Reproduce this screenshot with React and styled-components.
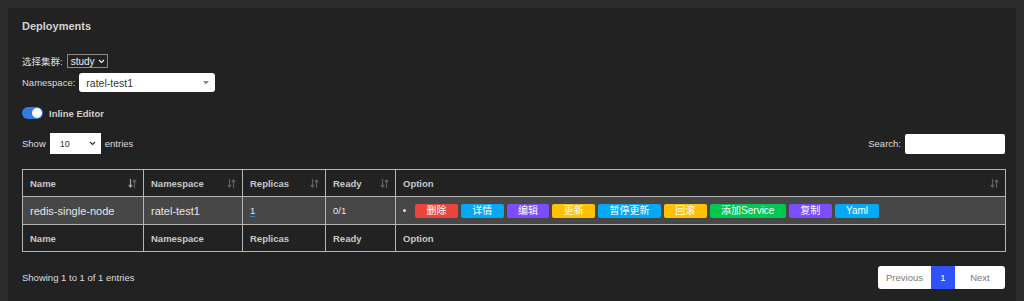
import React from "react";
import styled, { createGlobalStyle } from "styled-components";

const GlobalStyle = createGlobalStyle`
	html, body {
		overflow: hidden;
	}
	body {
		margin: 8px 8px 0;
		background: #2b2b2b;
		font-family: "Liberation Sans", "Noto Sans CJK SC", sans-serif;
		color: #dcdcdc;
	}
`;

const Card = styled.div`
	background: #222222;
	padding: 12px 11px 0 14px;
	height: 293px;
	box-sizing: border-box;
`;

const Title = styled.div`
	font-size: 11px;
	font-weight: bold;
	line-height: 13px;
	color: #d2d2d2;
`;

const FieldRow = styled.div`
	display: flex;
	align-items: center;
	gap: 4px;
	font-size: 9.5px;
	margin-top: ${(p) => p.$mt || 0}px;
	height: ${(p) => p.$h || 16}px;
`;

const DarkSelect = styled.div`
	display: flex;
	align-items: center;
	gap: 3px;
	height: 14px;
	box-sizing: border-box;
	padding: 0 2px 0 3px;
	border: 1px solid #8a8a8a;
	color: #eeeeee;
	font-size: 10px;
`;

const LightSelect = styled.div`
	display: flex;
	align-items: center;
	justify-content: space-between;
	width: ${(p) => p.$w}px;
	height: ${(p) => p.$h}px;
	box-sizing: border-box;
	padding: 0 ${(p) => p.$pr || 6}px 0 ${(p) => p.$pl || 7}px;
	background: #ffffff;
	border-radius: ${(p) => p.$r || 0}px;
	color: #333;
	font-size: ${(p) => p.$fs || 10}px;
`;

const Toggle = styled.div`
	width: 21px;
	height: 12px;
	border-radius: 6px;
	background: #2f7de1;
	position: relative;
	&::after {
		content: "";
		position: absolute;
		right: 1px;
		top: 1px;
		width: 10px;
		height: 10px;
		border-radius: 50%;
		background: #fff;
	}
`;

const ToggleLabel = styled.span`
	font-weight: bold;
	color: #cfcfcf;
	margin-left: 2px;
`;

const ControlBar = styled.div`
	display: flex;
	justify-content: space-between;
	align-items: center;
	margin-top: 14px;
	height: 21px;
	font-size: 9.5px;
`;

const Group = styled.div`
	display: flex;
	align-items: center;
	gap: 4px;
`;

const SearchInput = styled.div`
	width: 100px;
	height: 20px;
	background: #fff;
	border-radius: 2px;
`;

const Table = styled.table`
	margin-top: 15px;
	width: 983px;
	border-collapse: collapse;
	table-layout: fixed;
`;

const HeadCell = styled.th`
	border: 1px solid #b5b5b5;
	height: 27px;
	padding: 0 6px 0 7px;
	text-align: left;
	font-size: 9.5px;
	font-weight: bold;
	color: #c8c8c8;
	box-sizing: border-box;
`;

const HeadInner = styled.div`
	display: flex;
	align-items: center;
	justify-content: space-between;
`;

const BodyRow = styled.tr`
	background: #474747;
`;

const Cell = styled.td`
	border: 1px solid #b5b5b5;
	height: 28px;
	padding: 0 7px;
	font-size: ${(p) => (p.$big ? 11 : 9.5)}px;
	color: #e6e6e6;
	box-sizing: border-box;
`;

const Editable = styled.span`
	border-bottom: 1px dashed #3b83d6;
`;

const Actions = styled.div`
	display: flex;
	align-items: center;
	gap: 3px;
`;

const Bullet = styled.span`
	width: 3px;
	height: 3px;
	border-radius: 50%;
	background: #e0e0e0;
	margin: 0 6px 0 0;
`;

const ActionButton = styled.span`
	height: 14px;
	line-height: 14px;
	padding: 0 11.4px;
	border-radius: 2px;
	font-size: 10px;
	color: #ffffff;
	background: ${(p) => p.$bg};
`;

const Footer = styled.div`
	display: flex;
	justify-content: space-between;
	align-items: center;
	margin-top: 14px;
	font-size: 9.5px;
	width: 983px;
`;

const Pager = styled.div`
	display: flex;
	height: 23px;
	background: #fff;
	border-radius: 3px;
	overflow: hidden;
`;

const PageItem = styled.span`
	display: flex;
	align-items: center;
	justify-content: center;
	width: ${(p) => p.$w}px;
	font-size: 9.5px;
	color: ${(p) => (p.$active ? "#fff" : "#7a7a7a")};
	background: ${(p) => (p.$active ? "#3152fb" : "transparent")};
`;

const Chevron = () => (
	<svg width="7" height="5" viewBox="0 0 7 5">
		<path d="M1 1 L3.5 3.5 L6 1" fill="none" stroke="currentColor" strokeWidth="1.2" />
	</svg>
);

const Caret = () => (
	<svg width="6" height="4" viewBox="0 0 6 4">
		<path d="M0 0 L6 0 L3 3.5 Z" fill="#888" />
	</svg>
);

const SortIcon = ({ active }) => (
	<svg width="9" height="9" viewBox="0 0 9 9">
		<path d="M2.5 0 V8 M0.8 6 L2.5 8 L4.2 6" fill="none" stroke={active ? "#a0a0a0" : "#5e5e5e"} strokeWidth="1.2" />
		<path d="M6.5 9 V1 M4.8 3 L6.5 1 L8.2 3" fill="none" stroke="#5e5e5e" strokeWidth="1.2" />
	</svg>
);

const columns = [
	{ title: "Name", width: 121, active: true },
	{ title: "Namespace", width: 99 },
	{ title: "Replicas", width: 83 },
	{ title: "Ready", width: 70 },
	{ title: "Option", width: 610 },
];

const actions = [
	{ label: "删除", bg: "#e8453c" },
	{ label: "详情", bg: "#03a9f4" },
	{ label: "编辑", bg: "#7c4dff" },
	{ label: "更新", bg: "#ffc107" },
	{ label: "暂停更新", bg: "#03a9f4" },
	{ label: "回滚", bg: "#ffc107" },
	{ label: "添加Service", bg: "#00c853" },
	{ label: "复制", bg: "#7c4dff" },
	{ label: "Yaml", bg: "#03a9f4" },
];

const App = () => {
	return (
		<>
			<GlobalStyle />
			<Card>
				<Title>Deployments</Title>
				<FieldRow $mt={20}>
					选择集群:
					<DarkSelect>
						study <Chevron />
					</DarkSelect>
				</FieldRow>
				<FieldRow $mt={4} $h={19}>
					Namespace:
					<LightSelect $w={136} $h={19} $r={3} $fs={10.5}>
						ratel-test1 <Caret />
					</LightSelect>
				</FieldRow>
				<FieldRow $mt={15} $h={12}>
					<Toggle />
					<ToggleLabel>Inline Editor</ToggleLabel>
				</FieldRow>
				<ControlBar>
					<Group>
						Show
						<LightSelect $w={51} $h={21} $pl={10} $pr={5} $fs={9}>
							10 <Chevron />
						</LightSelect>
						entries
					</Group>
					<Group>
						Search:
						<SearchInput />
					</Group>
				</ControlBar>
				<Table>
					<colgroup>
						{columns.map((c) => (
							<col key={c.title} style={{ width: c.width }} />
						))}
					</colgroup>
					<thead>
						<tr>
							{columns.map((c) => (
								<HeadCell key={c.title}>
									<HeadInner>
										{c.title}
										<SortIcon active={c.active} />
									</HeadInner>
								</HeadCell>
							))}
						</tr>
					</thead>
					<tbody>
						<BodyRow>
							<Cell $big>redis-single-node</Cell>
							<Cell $big>ratel-test1</Cell>
							<Cell>
								<Editable>1</Editable>
							</Cell>
							<Cell>0/1</Cell>
							<Cell>
								<Actions>
									<Bullet />
									{actions.map((a) => (
										<ActionButton key={a.label} $bg={a.bg}>
											{a.label}
										</ActionButton>
									))}
								</Actions>
							</Cell>
						</BodyRow>
					</tbody>
					<tfoot>
						<tr>
							{columns.map((c) => (
								<HeadCell key={c.title}>{c.title}</HeadCell>
							))}
						</tr>
					</tfoot>
				</Table>
				<Footer>
					<span>Showing 1 to 1 of 1 entries</span>
					<Pager>
						<PageItem $w={53}>Previous</PageItem>
						<PageItem $w={24} $active>
							1
						</PageItem>
						<PageItem $w={50}>Next</PageItem>
					</Pager>
				</Footer>
			</Card>
		</>
	);
};

export default App;
